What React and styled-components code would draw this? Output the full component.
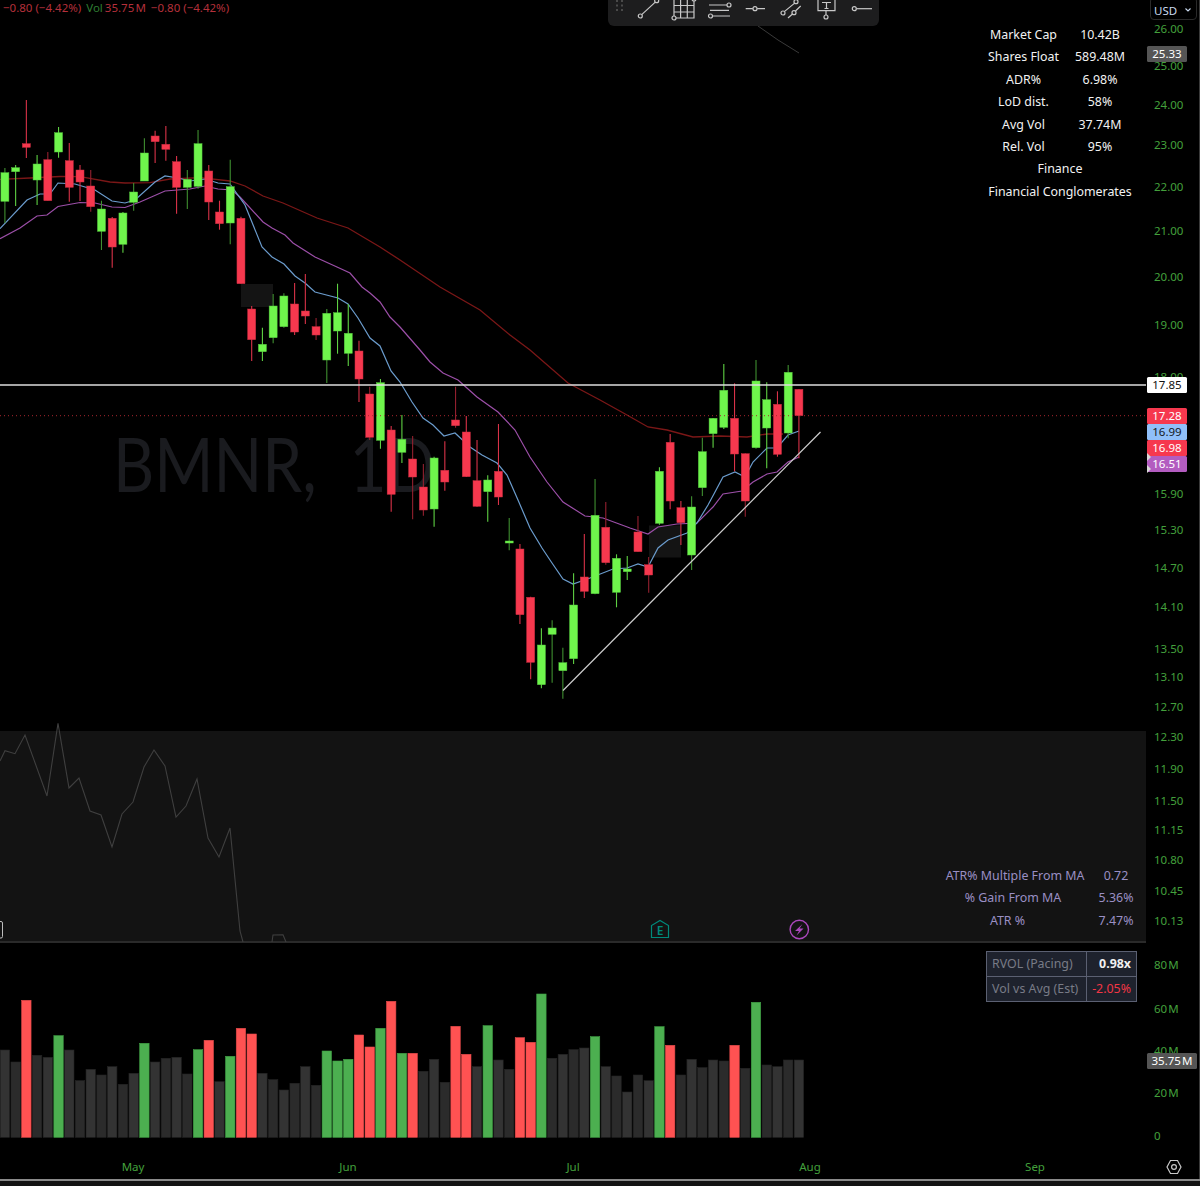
import { Fragment } from "react";
import styled, { createGlobalStyle } from "styled-components";

const GlobalStyle = createGlobalStyle`
  html, body { margin: 0; padding: 0; background: #000; }
  body { font-family: "Noto Sans", "Liberation Sans", sans-serif; }
`;

const GREEN_BODY = "#6ff54c";
const RED_BODY = "#f6384e";
const AXIS_GREEN = "#43a03c";

// wick top, body top, body bottom, wick bottom, colour, dim wick
const candles = [
  [168, 172.7, 201.3, 223, "g", 1], [165, 167.7, 171.7, 206, "g"], [100, 143.7, 147.3, 158, "r"], [155, 164, 180, 205, "g"],
  [152, 159.7, 200.7, 200.7, "r", 1], [127, 132.7, 152, 157.7, "g"], [143, 160.7, 187.3, 201.7, "r"], [165, 170, 182, 201, "r"],
  [170, 186, 206.7, 211.7, "r", 1], [200.7, 209, 231.3, 250, "g", 1], [217, 218.3, 247, 267.7, "r"], [212, 213, 244.3, 252.7, "g"],
  [183, 192, 202.3, 210.7, "g", 1], [138.3, 153, 181, 181, "g", 1], [130.7, 136, 141.7, 163, "r"], [126, 144.3, 149.3, 160.7, "r"],
  [156, 161.7, 187.3, 213.7, "r"], [170, 179.3, 187.3, 209, "g", 1], [130, 143.7, 186.3, 188.7, "g", 1], [165, 171, 202, 220, "r"],
  [200.7, 212, 223.7, 229.7, "r"], [159.7, 186.7, 223, 244.3, "g", 1], [216.7, 218.3, 283.7, 283.7, "r"], [306, 309, 339.7, 361, "r"],
  [327.7, 344.3, 351.7, 361, "g"], [294, 306, 337.7, 343.3, "g", 1], [293.3, 296, 326.7, 327.7, "g", 1], [283, 304, 332, 335, "r"],
  [274, 311, 316, 324, "r"], [318, 326.7, 335, 340, "r", 1], [309, 313.3, 360, 383, "g", 1], [283.7, 312.7, 331, 353.7, "g"],
  [304, 333.3, 353.3, 366, "g"], [340.7, 351, 379, 402, "r"], [386.7, 394, 437.3, 440, "r", 1], [379, 382.7, 440.3, 448.7, "g"],
  [426, 430, 494.3, 511.7, "r"], [415, 439.3, 452.3, 463, "g"], [436, 459, 477, 519.3, "r", 1], [464, 487, 510, 515.7, "r", 1],
  [456.7, 458, 509, 526.7, "g"], [441.3, 470.3, 482, 490.7, "r"], [386.7, 420, 425.7, 427.7, "r", 1], [416, 432, 476.7, 477, "r"],
  [440, 480.7, 506.3, 506.7, "r"], [475.3, 480, 491.7, 521.7, "g"], [424, 471.3, 497, 505, "r"], [518, 541, 543, 550.3, "g", 1],
  [544, 549, 614.7, 624, "r"], [596.7, 597.3, 662.3, 679.3, "r"], [628.3, 645, 684.7, 688.3, "g"], [620.3, 628, 634.3, 682.7, "g", 1],
  [647.7, 662.7, 670.7, 698.7, "g", 1], [573.3, 605, 658.7, 664, "g"], [534, 577, 591.3, 598, "r"], [479, 515.3, 593.7, 594.3, "g", 1],
  [502, 527.3, 562.7, 564.7, "r", 1], [554.3, 558.3, 592.3, 607.3, "g"], [556, 569, 571.7, 580, "g"], [516, 532, 551.7, 552, "r", 1],
  [557, 564.7, 575, 592.7, "r", 1], [467.3, 471.3, 523.3, 524.7, "g"], [434, 442.3, 501, 509.3, "r"], [501, 507.7, 522.7, 545, "r"],
  [496.3, 507, 555, 570, "g", 1], [437.7, 451.7, 487.7, 496, "g", 1], [418, 418.3, 433.7, 447.7, "g"], [364, 390.3, 427.3, 429, "g"],
  [383.3, 418.3, 454, 471.3, "r"], [453.3, 453.7, 501, 516.7, "r", 1], [360, 381, 447.7, 448.7, "g", 1], [382.3, 399.7, 428, 468.3, "g"],
  [391.3, 404.3, 454.3, 456.7, "r"], [365, 372.3, 433, 438.3, "g", 1], [389.3, 389.3, 415.7, 458.3, "r"],
];

// bar top, colour (k = neutral)
const volumes = [
  [1050, "k"], [1062, "k"], [1000.3, "r"], [1055.3, "k"], [1057.3, "k"], [1035.7, "g"], [1050, "k"], [1080.7, "k"], [1069.3, "k"], [1075, "k"],
  [1066.7, "k"], [1084.3, "k"], [1073.3, "k"], [1043.3, "g"], [1062, "k"], [1058.3, "k"], [1057.3, "k"], [1074, "k"], [1049.7, "g"], [1040.3, "r"],
  [1081.7, "k"], [1056.3, "g"], [1028.3, "r"], [1034, "r"], [1073.3, "k"], [1079.7, "k"], [1090, "k"], [1083.3, "k"], [1066.7, "k"], [1085.3, "k"],
  [1051, "g"], [1061, "g"], [1059.3, "g"], [1035, "r"], [1047, "r"], [1028.3, "g"], [1001.3, "r"], [1053.3, "g"], [1053.3, "r"], [1071.3, "k"],
  [1059.3, "k"], [1082.3, "k"], [1026.3, "r"], [1054.3, "r"], [1066.7, "k"], [1025.7, "g"], [1060, "k"], [1069.3, "k"], [1037.7, "r"], [1042.3, "r"],
  [994, "g"], [1058.3, "k"], [1054.3, "k"], [1049.7, "k"], [1048, "k"], [1036.7, "g"], [1066.7, "k"], [1076, "k"], [1092, "k"], [1075, "k"],
  [1080.7, "k"], [1026.7, "g"], [1045.3, "r"], [1075, "k"], [1059.3, "k"], [1067.7, "k"], [1060, "k"], [1061, "k"], [1045.3, "r"], [1068.3, "k"],
  [1002.3, "g"], [1065, "k"], [1066.7, "k"], [1060, "k"], [1060, "k"],
];

const slowMa = "0,179.3 30,178 60,176.5 80,176.7 110,182 125,183 150,182.7 170,179 200,177.7 230,181 245,186 263,196 283,203 317,218 348,228 380,247 400,260 440,287 480,310 510,335 530,350 568,383 600,400 627,415 648,427 667,430 693,437 720,436 747,437 767,434 783,434";
const fastMa = "0,228.7 27,200 40,194 50,194 58,183 75,184 95,190 112,201 125,203 135,200 155,182 165,176 178,178 190,181 205,179 218,183 230,184 245,205 262,247 272,257 284,264 295,276 305,283 315,292 338,298 348,304 358,318 370,338 380,346 391,371 400,382 412,402 423,418 433,425 444,436 455,433 470,447 482,455 497,463 507,475 518,500 530,528 542,548 552,563 563,579 573,584 590,578 613,569 627,568 638,564 648,567 658,548 668,540 687,533 697,523 708,505 715,492 723,477 735,472 745,477 753,462 767,448 777,448 788,435 799,431";
const midMa = "0,238.7 20,228 37,216 47,215 58,206.5 80,202.5 95,203 112,207 125,207.5 140,202 165,191 190,189 205,186 218,189 232,190 240,197 263,222 272,228 285,235 293,243 315,257 337,267 350,273 362,287 370,293 380,302 390,317 400,327 420,350 430,362 443,373 458,380 477,397 498,412 515,430 530,457 547,482 563,502 585,516 603,518 630,528 648,534 658,527 677,524 697,523 713,507 723,494 742,491 753,482 767,474 777,472 788,462 799,457";
const oscillator = "0,761 5,750.7 15,753.7 25,735 47,796 58,723.3 69,788 79,778 90,811 101,815 112,847 122,814 133,802 144,767 154,750 165,766 176,817 186,806 197,779 208,838 219,857 230,828 240,931 243,942";

const priceTicks = [
  ["26.00", 29], ["25.00", 66], ["24.00", 105], ["23.00", 145], ["22.00", 187], ["21.00", 231], ["20.00", 277], ["19.00", 325], ["18.00", 377],
  ["15.90", 494], ["15.30", 530], ["14.70", 568], ["14.10", 607], ["13.50", 649], ["13.10", 677], ["12.70", 707], ["12.30", 737], ["11.90", 769],
  ["11.50", 801], ["11.15", 830], ["10.80", 860], ["10.45", 891], ["10.13", 921], ["80\u200aM", 965], ["60\u200aM", 1009], ["40\u200aM", 1051], ["20\u200aM", 1093], ["0", 1136],
];

const priceTags = [
  { label: "25.33", top: 46, bg: "#555555", color: "#fff" },
  { label: "17.85", top: 377, bg: "#ffffff", color: "#111" },
  { label: "17.28", top: 408, bg: RED_BODY, color: "#fff" },
  { label: "16.99", top: 424, bg: "#90bff9", color: "#131722" },
  { label: "16.98", top: 440, bg: RED_BODY, color: "#fff" },
  { label: "16.51", top: 456, bg: "#b35cc0", color: "#fff", arrows: true },
  { label: "35.75\u200aM", top: 1053, bg: "#555555", color: "#fff", wide: true },
];

const stats = [
  ["Market Cap", "10.42B"], ["Shares Float", "589.48M"], ["ADR%", "6.98%"], ["LoD dist.", "58%"],
  ["Avg Vol", "37.74M"], ["Rel. Vol", "95%"],
];

const months = [["May", 133], ["Jun", 348], ["Jul", 573], ["Aug", 810], ["Sep", 1035]];

const candleX = (i) => 4.9 + i * 10.73;

const Page = styled.div`
  position: relative;
  display: flex;
  flex-direction: column;
  width: 1200px;
  height: 1186px;
  overflow: hidden;
  background: #000;
`;

const Workspace = styled.div`
  display: flex;
  height: 1179px;
`;

const Panes = styled.div`
  display: flex;
  flex-direction: column;
  width: 1146px;
`;

const PricePane = styled.div`
  position: relative;
  height: 731px;
`;

const IndicatorPane = styled.div`
  position: relative;
  height: 210px;
  background: #131313;
`;

const PaneDivider = styled.div`
  height: 2px;
  background: #2a2a2a;
`;

const VolumePane = styled.div`
  position: relative;
  height: 195px;
`;

const TimeAxis = styled.div`
  position: relative;
  flex: 1;
`;

const ChartSvg = styled.svg`
  position: absolute;
  left: 0;
  top: 0;
  display: block;
  overflow: visible;
`;

const Watermark = styled.div`
  position: absolute;
  left: 113px;
  top: 411px;
  font-family: "Lato", sans-serif;
  font-size: 76px;
  line-height: 104px;
  white-space: pre;
  color: #1a1b1f;
  transform: scaleX(0.84);
  transform-origin: left center;
`;

const Legend = styled.div`
  position: absolute;
  left: 3px;
  top: 0;
  display: flex;
  gap: 5px;
  font-size: 11.5px;
  line-height: 16px;
  color: #b5303b;
`;

const LegendVol = styled.span`
  margin-right: 2px;
  color: #2f7d33;
`;

const Toolbar = styled.div`
  position: absolute;
  left: 608px;
  top: -9px;
  display: flex;
  align-items: flex-start;
  width: 271px;
  height: 35px;
  box-sizing: border-box;
  padding-left: 22px;
  background: #1d1d1e;
  border-radius: 0 0 6px 6px;
`;

const Grip = styled.svg`
  position: absolute;
  left: 6px;
  top: 9px;
`;

const ToolIcon = styled.svg`
  flex: none;
  width: 35.7px;
  height: 36px;
  fill: none;
  stroke: #c8c8c8;
  stroke-width: 1.2;
  circle { fill: #1d1d1e; }
`;

const StatsTable = styled.div`
  position: absolute;
  left: 983.5px;
  top: 24px;
  display: grid;
  grid-template-columns: 80px 73px;
  grid-auto-rows: 22.4px;
  font-size: 12.4px;
  line-height: 22.4px;
  text-align: center;
  color: #f2f2f2;
  white-space: nowrap;
`;

const WideCell = styled.div`
  grid-column: 1 / -1;
`;

const AtrTable = styled.div`
  position: absolute;
  left: 940px;
  top: 134px;
  display: grid;
  grid-template-columns: 150px 52px;
  grid-auto-rows: 22.4px;
  font-size: 12.4px;
  line-height: 22.4px;
  text-align: center;
  color: #9a8fc4;
  white-space: nowrap;
`;

const AtrLabel = styled.div`
  padding-right: ${(p) => p.$inset || 0}px;
`;

const RvolTable = styled.div`
  position: absolute;
  left: 986px;
  top: 8px;
  display: grid;
  grid-template-columns: 99px 49px;
  grid-template-rows: 24px 24px;
  gap: 1px;
  padding: 1px;
  background: #5b6072;
  font-size: 12.4px;
  line-height: 24px;
`;

const RvolCell = styled.div`
  padding: 0 5px;
  background: #1e222d;
  color: ${(p) => p.$color || "#787b86"};
  font-weight: ${(p) => (p.$bold ? 700 : 400)};
  white-space: nowrap;
`;

const RvolValue = styled(RvolCell)`
  padding: 0 5px 0 0;
  text-align: right;
`;

const Scale = styled.div`
  position: relative;
  flex: 1;
  border-right: 1px solid #3a3a3a;
`;

const CurrencyButton = styled.div`
  position: absolute;
  left: 4px;
  top: -3px;
  display: flex;
  align-items: center;
  justify-content: space-between;
  box-sizing: border-box;
  width: 47px;
  height: 23px;
  padding: 3px 4px 0 3px;
  border: 1px solid #2a2a2a;
  border-radius: 4px;
  font-size: 11.5px;
  color: #c9d9ef;
`;

const Tick = styled.span`
  position: absolute;
  left: 8px;
  top: ${(p) => p.$y - 8}px;
  font-size: 11.5px;
  line-height: 16px;
  color: ${AXIS_GREEN};
  white-space: nowrap;
`;

const Tag = styled.span`
  position: absolute;
  left: 1px;
  top: ${(p) => p.$top}px;
  width: ${(p) => (p.$wide ? 50 : 40)}px;
  height: 16px;
  border-radius: 1.5px;
  background: ${(p) => p.$bg};
  color: ${(p) => p.$color};
  font-size: 11.5px;
  line-height: 16px;
  text-align: center;
  white-space: nowrap;
`;

const TagArrow = styled.i`
  position: absolute;
  left: 0;
  top: ${(p) => p.$top}px;
  border-top: 4px solid transparent;
  border-bottom: 4px solid transparent;
  border-left: 4px solid #d8d8d8;
`;

const MonthLabel = styled.span`
  position: absolute;
  left: ${(p) => p.$x}px;
  top: 21px;
  transform: translateX(-50%);
  font-size: 11.5px;
  line-height: 16px;
  color: ${AXIS_GREEN};
`;

const SettingsIcon = styled.svg`
  position: absolute;
  left: 1166px;
  top: 1159px;
  fill: none;
  stroke: #c8c8c8;
  stroke-width: 1.2;
`;

const Footer = styled.div`
  flex: 1;
  border-top: 2px solid #8a8a8a;
  background: #131313;
`;

function Tool({ children }) {
  return <ToolIcon viewBox="0 0 35.7 36">{children}</ToolIcon>;
}

function Candle({ data, index }) {
  const [wickTop, bodyTop, bodyBottom, wickBottom, colour, dim] = data;
  const x = candleX(index);
  const up = colour === "g";
  const wick = up ? (dim ? "#3f8f30" : "#5ed043") : dim ? "#94202f" : "#d93248";
  return (
    <g>
      <line x1={x} x2={x} y1={wickTop} y2={wickBottom} stroke={wick} strokeWidth="1.1" />
      <rect
        x={x - 4}
        y={bodyTop}
        width="8"
        height={bodyBottom - bodyTop}
        fill={up ? GREEN_BODY : RED_BODY}
        stroke={up ? "#54c63e" : "#c92d40"}
        strokeWidth="0.5"
      />
    </g>
  );
}

function App() {
  return (
    <Page>
      <GlobalStyle />
      <Workspace>
        <Panes>
          <PricePane>
            <Watermark>BMNR,  1D</Watermark>
            <ChartSvg width="1146" height="731" viewBox="0 0 1146 731">
              <rect x="241" y="284" width="32" height="23" fill="#141414" />
              <rect x="649" y="525.5" width="32" height="32" fill="#141414" />
              <polyline points="758,26 778,40 799,53" fill="none" stroke="#3a3a3a" strokeWidth="1" />
              <polyline points={slowMa} fill="none" stroke="#7b1717" strokeWidth="1.3" />
              <polyline points={midMa} fill="none" stroke="#9c4fa8" strokeWidth="1.2" />
              <polyline points={fastMa} fill="none" stroke="#6b9ccd" strokeWidth="1.2" />
              {candles.map((c, i) => (
                <Candle key={i} data={c} index={i} />
              ))}
              <line x1="0" x2="1146" y1="385" y2="385" stroke="#dedede" strokeWidth="1.6" />
              <line x1="0" x2="1146" y1="415.7" y2="415.7" stroke="#a8262f" strokeWidth="1" strokeDasharray="1 3" />
              <line x1="563" y1="690.5" x2="820.5" y2="432" stroke="#cfcfcf" strokeWidth="1.2" />
            </ChartSvg>
            <Legend>
              <span>−0.80 (−4.42%)</span>
              <span>
                <LegendVol>Vol</LegendVol>35.75{"\u200a"}M
              </span>
              <span>−0.80 (−4.42%)</span>
            </Legend>
            <Toolbar>
              <Grip width="12" height="14" viewBox="0 0 12 14" fill="#4a4a4a">
                <rect x="2" y="0" width="2" height="2" />
                <rect x="7" y="0" width="2" height="2" />
                <rect x="2" y="4.5" width="2" height="2" />
                <rect x="7" y="4.5" width="2" height="2" />
                <rect x="2" y="9" width="2" height="2" />
                <rect x="7" y="9" width="2" height="2" />
              </Grip>
              <Tool>
                <path d="M11.7 23.6 25.3 11.1" />
                <circle cx="10.3" cy="25" r="2" />
                <circle cx="26.7" cy="9.7" r="2" />
              </Tool>
              <Tool>
                <path d="M8 27V8H28V27H10M8 14.5H28M8 21H28M14.6 8V27M21.3 8V27" />
                <circle cx="8" cy="27" r="2" />
                <circle cx="28" cy="8" r="2" />
              </Tool>
              <Tool>
                <path d="M8 14H26M9 19.3H28M11.5 25H29" />
                <circle cx="28" cy="14" r="2" />
                <circle cx="9.5" cy="25" r="2" />
              </Tool>
              <Tool>
                <path d="M8.7 17.7H15.8M20.2 17.7H28" />
                <circle cx="18" cy="17.7" r="2" />
              </Tool>
              <Tool>
                <path d="M11.3 20.6 21.7 12.1M15 27 19.5 23M22.5 20 27.7 15" />
                <circle cx="10" cy="22" r="2" />
                <circle cx="23" cy="10.7" r="2" />
                <circle cx="21" cy="21.7" r="2" />
              </Tool>
              <Tool>
                <path d="M10 8H27V19.7H10ZM14 11.5H23M18.5 11.5V17.5M16.5 17.5H20.5M18 19.7V24" />
                <circle cx="18" cy="26" r="2" />
              </Tool>
              <Tool>
                <path d="M12.3 17.7H28" />
                <circle cx="10.3" cy="17.7" r="2" />
              </Tool>
            </Toolbar>
            <StatsTable>
              {stats.map(([label, value]) => (
                <Fragment key={label}>
                  <div>{label}</div>
                  <div>{value}</div>
                </Fragment>
              ))}
              <WideCell>Finance</WideCell>
              <WideCell>Financial Conglomerates</WideCell>
            </StatsTable>
          </PricePane>
          <IndicatorPane>
            <ChartSvg width="1146" height="210" viewBox="0 731 1146 210">
              <polyline points={oscillator} fill="none" stroke="#3f3f3f" strokeWidth="1.1" />
              <polyline points="272,942 273,935 283,934.7 286,942" fill="none" stroke="#3f3f3f" strokeWidth="1.1" />
              <rect x="-6" y="921.5" width="8.5" height="16.5" rx="1.5" fill="none" stroke="#bdbdbd" strokeWidth="1" />
              {/* earnings marker */}
              <path d="M651.5 937.5V925.5L660 920.5 668.5 925.5V937.5Z" fill="none" stroke="#00897b" strokeWidth="1.2" />
              <text x="660" y="935" textAnchor="middle" fontSize="12" fontWeight="600" fontFamily="Noto Sans" fill="#00897b">E</text>
              {/* dividends/splits marker */}
              <circle cx="799.3" cy="929.5" r="9.2" fill="none" stroke="#ab47bc" strokeWidth="1.4" />
              <path d="M802.5 924 795 931H799L796.5 935.5 803.5 928.5H799.5Z" fill="#ab47bc" />
            </ChartSvg>
            <AtrTable>
              <AtrLabel>ATR% Multiple From MA</AtrLabel>
              <div>0.72</div>
              <AtrLabel $inset={4}>% Gain From MA</AtrLabel>
              <div>5.36%</div>
              <AtrLabel $inset={15}>ATR %</AtrLabel>
              <div>7.47%</div>
            </AtrTable>
          </IndicatorPane>
          <PaneDivider />
          <VolumePane>
            <ChartSvg width="1146" height="195" viewBox="0 943 1146 195">
              {volumes.map(([top, colour], i) => {
                const fill = colour === "g" ? "#4caf50" : colour === "r" ? "#ff5252" : i % 2 ? "#2b2b2b" : "#333333";
                const edge = colour === "g" ? "#3f9e44" : colour === "r" ? "#e24a4a" : "#232323";
                return (
                  <rect
                    key={i}
                    x={candleX(i) - 4.7}
                    y={top}
                    width="9.4"
                    height={1137.3 - top}
                    fill={fill}
                    stroke={edge}
                    strokeWidth="0.6"
                  />
                );
              })}
            </ChartSvg>
            <RvolTable>
              <RvolCell>RVOL (Pacing)</RvolCell>
              <RvolValue $color="#f0f0f0" $bold>
                0.98x
              </RvolValue>
              <RvolCell>Vol vs Avg (Est)</RvolCell>
              <RvolValue $color="#f23645">-2.05%</RvolValue>
            </RvolTable>
          </VolumePane>
          <TimeAxis>
            {months.map(([label, x]) => (
              <MonthLabel key={label} $x={x}>
                {label}
              </MonthLabel>
            ))}
          </TimeAxis>
        </Panes>
        <Scale>
          <CurrencyButton>
            USD
            <svg width="8" height="6" viewBox="0 0 8 6" fill="none" stroke="#c9d9ef" strokeWidth="1.1">
              <path d="M1.5 1.5 4 4 6.5 1.5" />
            </svg>
          </CurrencyButton>
          {priceTicks.map(([label, y]) => (
            <Tick key={label} $y={y}>
              {label}
            </Tick>
          ))}
          {priceTags.map((t) => (
            <Tag key={t.label} $top={t.top} $bg={t.bg} $color={t.color} $wide={t.wide}>
              {t.label}
              {t.arrows && <TagArrow $top={-3} />}
              {t.arrows && <TagArrow $top={9} />}
            </Tag>
          ))}
        </Scale>
      </Workspace>
      <Footer />
      <SettingsIcon width="16" height="16" viewBox="0 0 16 16">
        <path d="M4.5 1.5H11.5L15 8 11.5 14.5H4.5L1 8Z" />
        <circle cx="8" cy="8" r="2.4" />
      </SettingsIcon>
    </Page>
  );
}

export default App;
